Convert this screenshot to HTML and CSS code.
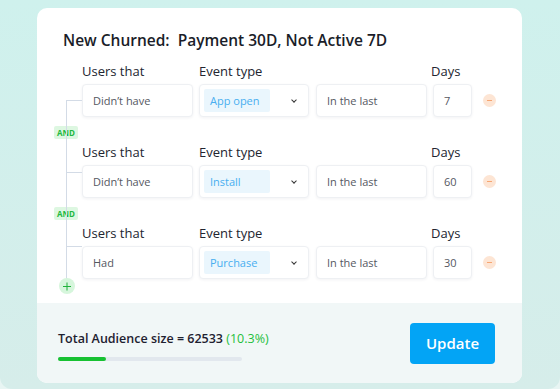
FILE: index.html
```html
<!doctype html>
<html>
<head>
<meta charset="utf-8">
<title>New Churned</title>
<link rel="stylesheet" href="styles.css">
</head>
<body>
<div class="stage">
<div class="card">
	<div class="card-body">
		<h1 class="title">New Churned:&nbsp; Payment 30D, Not Active 7D</h1>
		<div class="conditions">
			<div class="cond cond-1">
				<div class="labels"><span>Users that</span><span>Event type</span><span></span><span>Days</span></div>
				<div class="fields">
					<div class="box">Didn’t have</div>
					<div class="box select"><span class="chip">App open</span><span class="chev"></span></div>
					<div class="box">In the last</div>
					<div class="box">7</div>
					<span class="minus"></span>
				</div>
			</div>
			<div class="and"><span>AND</span></div>
			<div class="cond cond-2">
				<div class="labels"><span>Users that</span><span>Event type</span><span></span><span>Days</span></div>
				<div class="fields">
					<div class="box">Didn’t have</div>
					<div class="box select"><span class="chip">Install</span><span class="chev"></span></div>
					<div class="box">In the last</div>
					<div class="box">60</div>
					<span class="minus"></span>
				</div>
			</div>
			<div class="and"><span>AND</span></div>
			<div class="cond cond-3">
				<div class="labels"><span>Users that</span><span>Event type</span><span></span><span>Days</span></div>
				<div class="fields">
					<div class="box">Had</div>
					<div class="box select"><span class="chip">Purchase</span><span class="chev"></span></div>
					<div class="box">In the last</div>
					<div class="box">30</div>
					<span class="minus"></span>
				</div>
			</div>
			<span class="plus"></span>
		</div>
	</div>
	<div class="card-foot">
		<div class="audience">
			<p class="total">Total Audience size = 62533 <span class="pct">(10.3%)</span></p>
			<div class="bar"><div class="bar-fill" style="width: 26%"></div></div>
		</div>
		<button class="update">Update</button>
	</div>
</div>
</div>
</body>
</html>
```

FILE: styles.css
```css
body {
	margin: 0;
	background: #e8f5f3;
	font-family: "Open Sans", "Noto Sans", sans-serif;
	color: #1f2430;
}
.stage {
	width: 560px;
	height: 389px;
	box-sizing: border-box;
	padding: 8px 0 0 37px;
	background: linear-gradient(180deg, #cff1ed 0%, #d6edea 100%);
	border-radius: 0 0 12px 12px;
	overflow: hidden;
}
.card {
	width: 485px;
	height: 375px;
	background: #fff;
	border-radius: 10px;
	overflow: hidden;
	display: flex;
	flex-direction: column;
}
.card-body {
	flex: 1;
	padding: 22px 0 0 26px;
}
.title {
	margin: 0;
	font-size: 15.5px;
	font-weight: 600;
	line-height: 20px;
	color: #1a1d29;
}
.conditions {
	position: relative;
	padding-left: 19px;
	margin-top: 12px;
}
.conditions::before {
	content: "";
	position: absolute;
	left: 3px;
	top: 38px;
	bottom: 14px;
	border-left: 1px solid #d3dbe6;
}
.labels {
	display: grid;
	grid-template-columns: 111px 110px 110px 39px;
	column-gap: 6px;
	font-size: 13px;
	line-height: 18px;
	color: #222530;
	margin-bottom: 4px;
}
.fields {
	position: relative;
	display: flex;
	align-items: center;
	gap: 6px;
	height: 33px;
}
.fields::before {
	content: "";
	position: absolute;
	left: -16px;
	width: 16px;
	border-top: 1px solid #d3dbe6;
}
.cond-1 .fields::before { top: 16px; }
.cond-2 .fields::before { top: 7px; }
.cond-3 .fields::before { top: 0; }
.box {
	box-sizing: border-box;
	height: 33px;
	display: flex;
	align-items: center;
	padding-left: 10px;
	background: #fff;
	border: 1px solid #eef0f3;
	border-radius: 4px;
	box-shadow: 0 1px 3px rgba(30, 40, 60, 0.06);
	font-size: 11px;
	color: #55585f;
}
.box:nth-child(1) { width: 111px; }
.box:nth-child(2) { width: 110px; }
.box:nth-child(3) { width: 111px; margin-left: 1px; }
.box:nth-child(4) { width: 39px; }
.select {
	padding: 4px;
	justify-content: space-between;
}
.chip {
	box-sizing: border-box;
	height: 100%;
	width: 66px;
	display: flex;
	align-items: center;
	padding-left: 6px;
	background: #eaf6fd;
	border-radius: 2px;
	color: #48aef0;
}
.chev {
	width: 3px;
	height: 3px;
	margin-right: 8px;
	margin-bottom: 2px;
	border-right: 1px solid #333;
	border-bottom: 1px solid #333;
	transform: rotate(45deg);
}
.minus {
	position: relative;
	width: 13px;
	height: 13px;
	margin-left: 5px;
	border-radius: 50%;
	background: #fde5d4;
}
.minus::after {
	content: "";
	position: absolute;
	left: 4px;
	top: 6px;
	width: 5px;
	border-top: 1.5px solid #f7a672;
}
.and {
	height: 26px;
	padding-top: 9px;
	box-sizing: border-box;
}
.and span {
	display: block;
	margin-left: -28px;
	width: 24px;
	height: 13px;
	line-height: 13px;
	text-align: center;
	background: #ddf7e1;
	border-radius: 2px;
	font-size: 8px;
	font-weight: 700;
	color: #22b83e;
}
.plus {
	display: block;
	position: relative;
	width: 16px;
	height: 16px;
	margin: -1px 0 0 -23px;
	border-radius: 50%;
	background: #d6f6dc;
}
.plus::before, .plus::after {
	content: "";
	position: absolute;
	left: 4px;
	top: 7.5px;
	width: 8px;
	border-top: 1px solid #1fb23a;
}
.plus::after {
	transform: rotate(90deg);
}
.card-foot {
	height: 80px;
	box-sizing: border-box;
	background: #f1f7f7;
	display: flex;
	align-items: center;
	justify-content: space-between;
	padding: 0 27px 0 21px;
}
.audience {
	padding-top: 4px;
}
.total {
	margin: 0;
	font-size: 12.5px;
	font-weight: 600;
	color: #1e2130;
}
.pct {
	font-weight: 400;
	color: #1fbf3c;
}
.bar {
	margin-top: 10px;
	width: 184px;
	height: 4px;
	border-radius: 2px;
	background: #e2e8ee;
}
.bar-fill {
	height: 100%;
	border-radius: 2px;
	background: #17c132;
}
.update {
	width: 85px;
	height: 41px;
	border: 0;
	border-radius: 4px;
	background: #03a4f5;
	color: #fff;
	font-family: inherit;
	font-size: 15px;
	font-weight: 600;
}
```
